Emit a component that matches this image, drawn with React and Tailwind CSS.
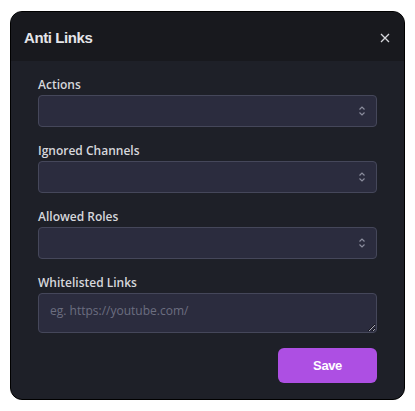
import React, { useState } from 'react';

const SelectField = ({ label }) => (
    <div className="flex flex-col">
        <label className="text-[12px] leading-[16px] font-semibold text-[#d6d7dc] mb-[2px] font-['Open_Sans',sans-serif]">{label}</label>
        <div className="relative h-[32px] rounded-[4px] border border-[#45475a] bg-[#2b2c3e]">
            <svg className="absolute right-[10px] top-1/2 -translate-y-1/2" width="8" height="12" viewBox="0 0 8 12" fill="none" stroke="#8a8c9c" strokeWidth="1.2">
                <path d="M1.5 4.5 L4 2 L6.5 4.5" />
                <path d="M1.5 7.5 L4 10 L6.5 7.5" />
            </svg>
        </div>
    </div>
);

const App = () => {
    const [links, setLinks] = useState('');

    return (
        <div className="min-h-screen bg-white pt-[11px] px-[10px] font-['Open_Sans',sans-serif]">
            <div className="w-[395px] h-[389px] rounded-[12px] border border-black overflow-hidden bg-[#1e2028] flex flex-col">
                <div className="h-[49px] bg-[#18191e] flex items-center justify-between pl-[13px] pr-[14px] pt-[3px]">
                    <h2 className="text-[15px] font-bold tracking-[-0.4px] text-[#e4e5e9] font-['Liberation_Sans',Arial,sans-serif]">Anti Links</h2>
                    <button className="text-[#d6d7dc]">
                        <svg width="10" height="10" viewBox="0 0 10 10" stroke="currentColor" strokeWidth="1.3">
                            <path d="M1 1 L9 9 M9 1 L1 9" />
                        </svg>
                    </button>
                </div>
                <div className="flex flex-col gap-[16px] pt-[16px] px-[27px]">
                    <SelectField label="Actions" />
                    <SelectField label="Ignored Channels" />
                    <SelectField label="Allowed Roles" />
                    <div className="flex flex-col">
                        <label className="text-[12px] leading-[16px] font-semibold text-[#d6d7dc] mb-[2px]">Whitelisted Links</label>
                        <textarea
                            value={links}
                            onChange={(e) => setLinks(e.target.value)}
                            placeholder="eg. https://youtube.com/"
                            className="h-[40px] rounded-[4px] border border-[#45475a] bg-[#2b2c3e] px-[11px] py-[8px] text-[12px] leading-[18px] text-[#d6d7dc] placeholder:text-[#6c6e80] outline-none resize-y"
                        ></textarea>
                    </div>
                    <div className="flex justify-end -mt-[1px]">
                        <button className="w-[99px] h-[35px] rounded-[6px] bg-[#ad4fe3] text-white text-[13px] font-bold tracking-[-0.4px] font-['Liberation_Sans',Arial,sans-serif]">
                            Save
                        </button>
                    </div>
                </div>
            </div>
        </div>
    );
};

export default App;
